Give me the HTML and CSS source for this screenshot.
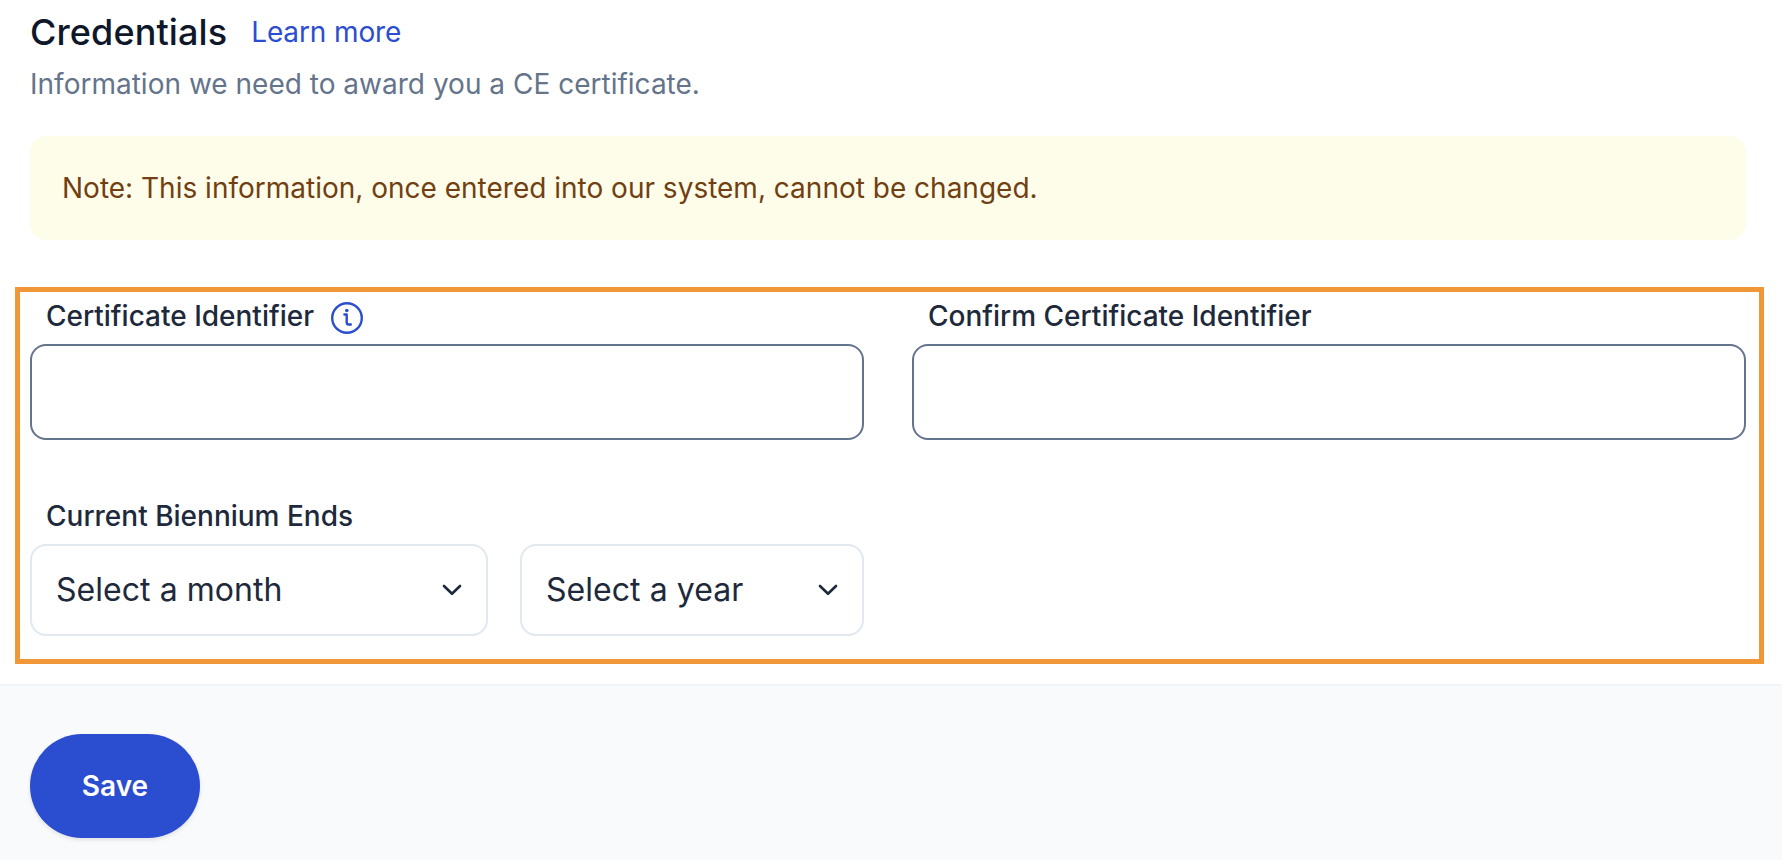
FILE: index.html
```html
<!DOCTYPE html>
<html lang="en">
<head>
<meta charset="utf-8">
<title>Credentials</title>
<link rel="stylesheet" href="styles.css">
</head>
<body>
<form class="page">
  <header class="intro">
    <div class="heading">
      <h2 class="title">Credentials</h2>
      <a class="learn" href="#">Learn more</a>
    </div>
    <p class="subtitle">Information we need to award you a CE certificate.</p>
    <div class="note">Note: This information, once entered into our system, cannot be changed.</div>
  </header>
  <section class="fields">
    <div class="field">
      <div class="label"><label for="cert">Certificate Identifier</label>
        <svg class="info" viewBox="0 0 32 32" fill="none" stroke="currentColor">
          <circle cx="16" cy="16" r="14.8" stroke-width="2.4"/>
          <path d="M13.4 12.5H15.7V20.2Q15.7 22.5 17.8 22.5H19.8" stroke-width="2.4" stroke-linecap="round" stroke-linejoin="round"/>
          <circle cx="15.8" cy="8.5" r="1.8" fill="currentColor" stroke="none"/>
        </svg>
      </div>
      <input class="input" id="cert" type="text">
    </div>
    <div class="field">
      <div class="label"><label for="confirm">Confirm Certificate Identifier</label></div>
      <input class="input" id="confirm" type="text">
    </div>
    <div class="field">
      <div class="label">Current Biennium Ends</div>
      <div class="selects">
        <button class="select" type="button">Select a month
          <svg class="chevron" viewBox="0 0 20 12" fill="none" stroke="currentColor" stroke-width="2.6" stroke-linecap="round" stroke-linejoin="round"><path d="M2 2l8 7.8L18 2"/></svg>
        </button>
        <button class="select" type="button">Select a year
          <svg class="chevron" viewBox="0 0 20 12" fill="none" stroke="currentColor" stroke-width="2.6" stroke-linecap="round" stroke-linejoin="round"><path d="M2 2l8 7.8L18 2"/></svg>
        </button>
      </div>
    </div>
  </section>
  <footer class="footer">
    <button class="save" type="button">Save</button>
  </footer>
</form>
</body>
</html>
```
FILE: styles.css
```css
* { box-sizing: border-box; }
body {
  margin: 0;
  background: #fff;
  font-family: Inter, "Liberation Sans", sans-serif;
  font-size: 28px;
  line-height: 40px;
  color: #1e293b;
}
.page { display: flex; flex-direction: column; height: 860px; overflow: hidden; }
.intro { padding: 8px 36px 0 30px; }
.heading { display: flex; align-items: center; gap: 24px; height: 48px; }
.title { margin: 0; font-size: 36px; line-height: 48px; font-weight: 500; letter-spacing: 0.1px; color: #0f172a; }
.learn { letter-spacing: -0.12px; color: #2b4dd0; text-decoration: none; }
.subtitle { margin: 8px 0 0; letter-spacing: 0.01px; color: #64748b; }
.note { margin-top: 32px; padding: 32px; border-radius: 16px; background: #fefdea; color: #713f12; }
.fields {
  display: grid;
  grid-template-columns: 1fr 1fr;
  gap: 56px 48px;
  margin: 47px 18px 0 15px;
  padding: 4px 13px 23px 10px;
  border: 5px solid #f09837;
}
.label { display: flex; align-items: center; gap: 16px; height: 40px; margin-bottom: 8px; padding-left: 16px; font-weight: 500; }
.info { width: 32px; height: 32px; margin: 4px 0 0 1px; color: #2b4dd0; }
.input { display: block; width: 100%; height: 96px; padding: 0 24px; border: 2px solid #64748b; border-radius: 16px; background: #fff; font: inherit; }
.selects { display: grid; grid-template-columns: 458px 1fr; gap: 32px; }
.select {
  display: flex; align-items: center; justify-content: space-between;
  height: 92px; padding: 0 24px;
  border: 2px solid #e2e8f0; border-radius: 16px; background: #fff;
  font: inherit; font-size: 32px; letter-spacing: 0.05px; color: inherit;
}
.chevron { width: 20px; height: 12px; }
.footer { flex: 1; margin-top: 20px; padding: 48px 30px 0; border-top: 2px solid #f1f5f9; background: #f9fafc; }
.save {
  display: block; width: 170px; height: 104px; padding: 0;
  border: 0; border-radius: 52px; background: #2b4dd0; color: #fff;
  font: inherit; font-weight: 600;
  box-shadow: 0 2px 4px rgba(0, 0, 0, 0.1);
}
```
